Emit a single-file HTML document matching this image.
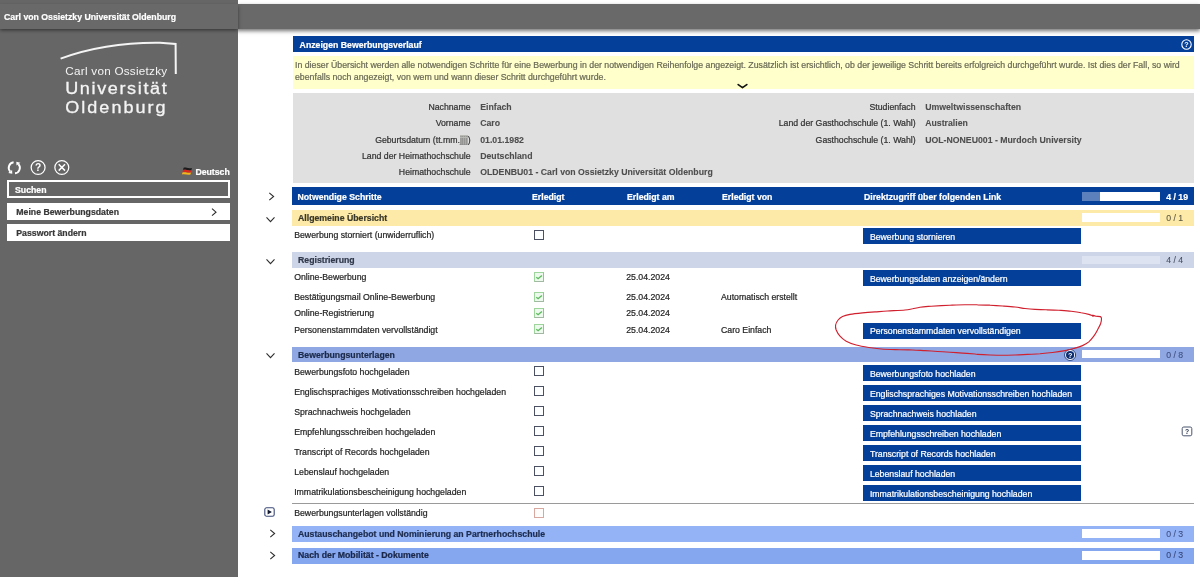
<!DOCTYPE html><html><head><meta charset="utf-8"><title>Bewerbungsverlauf</title><style>
*{margin:0;padding:0;box-sizing:border-box}
html,body{width:1200px;height:577px;overflow:hidden;background:#fff}
body{font-family:"Liberation Sans",sans-serif;font-size:8.73px;color:#262626;position:relative;-webkit-text-stroke:.22px}
#root{position:absolute;left:0;top:0;width:1200px;height:577px;overflow:hidden;will-change:transform}
.a{position:absolute;white-space:nowrap;line-height:12px;height:12px}
.r{text-align:right}
.b{font-weight:bold}
.w{color:#fff}
.bar{position:absolute;left:292.2px;width:901.4px}
.btn{position:absolute;left:863.2px;width:217.6px;height:16px;background:#04409a}
.cb{position:absolute;left:534px;width:10px;height:10px;border:1px solid #4b5163;background:#fdfeff}
.cbg{position:absolute;left:533.9px;width:10px;height:9.7px;border:1px solid #9dd59d;border-right-color:#a3b8a3;border-bottom-color:#a3b8a3;background:#ecf9ec}
.pg{position:absolute;left:1081.8px;width:78.6px;height:8.8px;background:#fff}
</style></head><body><div id="root">
<div style="position:absolute;left:237px;top:4.2px;width:963px;height:24.5px;background:#696969;box-shadow:0 1.5px 4px rgba(0,0,0,.55)"></div>
<div style="position:absolute;left:0;top:0;width:237.9px;height:577px;background:#666"></div>
<div style="position:absolute;left:0;top:4.2px;width:237.9px;height:24.5px;background:#696969;box-shadow:0 1.5px 3.5px rgba(0,0,0,.5)"></div>
<div class="a b w" style="left:4.3px;top:10.6px;font-size:9.5px;transform:scaleX(.918);transform-origin:0 0">Carl von Ossietzky Universität Oldenburg</div>
<svg style="position:absolute;left:0;top:30px" width="238" height="100" viewBox="0 30 238 100">
<path d="M60.6,58.6 C92,47.2 128,42.4 160,42.8 L175.6,44 L175.8,74" fill="none" stroke="#f4f4f4" stroke-width="2" stroke-linejoin="miter"/>
<g fill="#f4f4f4" font-family="Liberation Sans, sans-serif">
<text x="65.3" y="74.9" font-size="11.7" textLength="101.8" lengthAdjust="spacing">Carl von Ossietzky</text>
<text transform="translate(65.2,93.6) scale(1.1,1)" font-size="16.4" textLength="92.3" lengthAdjust="spacing" stroke="#f4f4f4" stroke-width=".3">Universität</text>
<text transform="translate(65.2,112.7) scale(1.1,1)" font-size="16.4" textLength="91.3" lengthAdjust="spacing" stroke="#f4f4f4" stroke-width=".3">Oldenburg</text>
</g></svg>
<svg style="position:absolute;left:5px;top:158px" width="70" height="20" viewBox="5 158 70 20" fill="none" stroke="#fff" stroke-width="1.5">
<path d="M13.6,162.3 A5.5,5.5 0 0 0 10.2,171.5" stroke-width="1.9"/>
<path d="M15,173.3 A5.5,5.5 0 0 0 18.4,164.1" stroke-width="1.9"/>
<path d="M12.3,173.8 L12.1,170 L8.2,172.9 Z M16.3,161.8 L16.5,165.6 L20.4,162.7 Z" fill="#fff" stroke="none"/>
<circle cx="38.1" cy="167.5" r="6.95" stroke-width="1.25"/>
<text x="38.1" y="171.3" font-size="10.2" font-weight="bold" text-anchor="middle" fill="#fff" stroke="none" font-family="Liberation Sans, sans-serif">?</text>
<circle cx="61.8" cy="167.5" r="6.95" stroke-width="1.25"/>
<path d="M58.7,164.3 L65,170.6 M65,164.3 L58.7,170.6" stroke-width="1.5"/>
</svg>
<svg style="position:absolute;left:181px;top:166.6px" width="12" height="9" viewBox="0 0 12 9">
<path d="M2.6,0.8 C4.5,0 6.5,1.8 10.9,1 L10.4,3.3 C6.5,4 4.6,2.2 2,3.1 Z" fill="#1a1a1a"/>
<path d="M2,3.1 C4.6,2.2 6.5,4 10.4,3.3 L9.9,5.5 C6.4,6.2 4.4,4.5 1.4,5.4 Z" fill="#d9281c"/>
<path d="M1.4,5.4 C4.4,4.5 6.4,6.2 9.9,5.5 L9.5,7.6 C6,8.3 3.8,6.7 0.9,7.6 Z" fill="#f2b41a"/>
</svg>
<div class="a b w" style="left:195.4px;top:165.98px;">Deutsch</div>
<div style="position:absolute;left:7px;top:180px;width:222.6px;height:18.2px;border:2px solid #fff;background:#666"></div>
<div class="a b w" style="left:15px;top:183.98px;">Suchen</div>
<div style="position:absolute;left:7px;top:203px;width:222.6px;height:16.6px;background:#fff"></div>
<div class="a b" style="left:16.3px;top:205.98px;color:#383838">Meine Bewerbungsdaten</div>
<svg style="position:absolute;left:209px;top:206px" width="10" height="12" viewBox="0 0 10 12"><path d="M3,2.7 L7,6.2 L3,9.7" fill="none" stroke="#2a2a2a" stroke-width="1.1"/></svg>
<div style="position:absolute;left:7px;top:224.1px;width:222.6px;height:16.7px;background:#fff"></div>
<div class="a b" style="left:16.3px;top:226.98px;color:#383838">Passwort ändern</div>
<div style="position:absolute;left:293px;top:36px;width:900.6px;height:16px;background:#04409a"></div>
<div class="a b w" style="left:299.6px;top:38.98px;">Anzeigen Bewerbungsverlauf</div>
<svg style="position:absolute;left:1180px;top:38px" width="13" height="13" viewBox="0 0 13 13"><circle cx="6.5" cy="6.5" r="4.7" fill="none" stroke="#fff" stroke-width="1.1"/><text x="6.5" y="9.2" font-size="7.2" font-weight="bold" text-anchor="middle" fill="#fff" font-family="Liberation Sans, sans-serif">?</text></svg>
<div style="position:absolute;left:293px;top:55.6px;width:900.6px;height:33.4px;background:#ffffcc"></div>
<div class="a " style="left:295px;top:58.98px;color:#6a6a56;font-size:8.76px">In dieser Übersicht werden alle notwendigen Schritte für eine Bewerbung in der notwendigen Reihenfolge angezeigt. Zusätzlich ist ersichtlich, ob der jeweilige Schritt bereits erfolgreich durchgeführt wurde. Ist dies der Fall, so wird</div>
<div class="a " style="left:295px;top:70.98px;color:#6a6a56;font-size:8.76px">ebenfalls noch angezeigt, von wem und wann dieser Schritt durchgeführt wurde.</div>
<svg style="position:absolute;left:737.4px;top:82.8px" width="11" height="7" viewBox="0 0 11 7"><path d="M1.2,1.6 L5.5,4.6 L9.8,1.6" fill="none" stroke="#111" stroke-width="1.7" stroke-linejoin="round" stroke-linecap="round"/></svg>
<div style="position:absolute;left:293px;top:92.7px;width:900.6px;height:90.1px;background:#e0e0e0"></div>
<div class="a r " style="left:170.60000000000002px;width:300px;top:100.98px;color:#333">Nachname</div>
<div class="a b" style="left:480.2px;top:100.98px;color:#4e4e4e;-webkit-text-stroke:.1px">Einfach</div>
<div class="a r " style="left:170.60000000000002px;width:300px;top:116.98px;color:#333">Vorname</div>
<div class="a b" style="left:480.2px;top:116.98px;color:#4e4e4e;-webkit-text-stroke:.1px">Caro</div>
<div class="a r " style="left:170.60000000000002px;width:300px;top:133.98px;color:#333">Geburtsdatum (tt.mm.<span style="color:#8a8a8a;background:#b9b9b4">jjjj</span>)</div>
<div class="a b" style="left:480.2px;top:133.98px;color:#4e4e4e;-webkit-text-stroke:.1px">01.01.1982</div>
<div class="a r " style="left:170.60000000000002px;width:300px;top:149.98px;color:#333">Land der Heimathochschule</div>
<div class="a b" style="left:480.2px;top:149.98px;color:#4e4e4e;-webkit-text-stroke:.1px">Deutschland</div>
<div class="a r " style="left:170.60000000000002px;width:300px;top:165.98px;color:#333">Heimathochschule</div>
<div class="a b" style="left:480.2px;top:165.98px;color:#4e4e4e;-webkit-text-stroke:.1px">OLDENBU01 - Carl von Ossietzky Universität Oldenburg</div>
<div class="a r " style="left:615.6px;width:300px;top:100.98px;color:#333">Studienfach</div>
<div class="a b" style="left:925.2px;top:100.98px;color:#4e4e4e;-webkit-text-stroke:.1px">Umweltwissenschaften</div>
<div class="a r " style="left:615.6px;width:300px;top:116.98px;color:#333">Land der Gasthochschule (1. Wahl)</div>
<div class="a b" style="left:925.2px;top:116.98px;color:#4e4e4e;-webkit-text-stroke:.1px">Australien</div>
<div class="a r " style="left:615.6px;width:300px;top:133.98px;color:#333">Gasthochschule (1. Wahl)</div>
<div class="a b" style="left:925.2px;top:133.98px;color:#4e4e4e;-webkit-text-stroke:.1px">UOL-NONEU001 - Murdoch University</div>
<div class="bar" style="top:187px;height:17.9px;background:#04409a"></div>
<div class="a b w" style="left:297.4px;top:190.98px;">Notwendige Schritte</div>
<div class="a b w" style="left:532px;top:190.98px;">Erledigt</div>
<div class="a b w" style="left:627px;top:190.98px;">Erledigt am</div>
<div class="a b w" style="left:722px;top:190.98px;">Erledigt von</div>
<div class="a b w" style="left:864px;top:190.98px;">Direktzugriff über folgenden Link</div>
<div class="pg" style="top:191.7px;height:9.2px"></div><div style="position:absolute;left:1081.8px;top:191.7px;width:18px;height:9.2px;background:#5c80bb"></div>
<div class="a b w" style="left:1166.2px;top:190.98px;">4 / 19</div>
<svg style="position:absolute;left:267.1px;top:191.2px" width="9" height="11" viewBox="0 0 9 11"><path d="M2.3,1.9 L6.6,5.5 L2.3,9.1" fill="none" stroke="#2e2e2e" stroke-width="1.1"/></svg>
<div class="bar" style="top:210.4px;height:15.5px;background:#fde9a8"></div>
<div class="a b" style="left:298px;top:211.98px;color:#3a3828">Allgemeine Übersicht</div>
<div class="pg" style="top:213.2px;height:8.6px"></div>
<div class="a " style="left:1166.2px;top:211.98px;color:#5a5640;-webkit-text-stroke:.08px">0 / 1</div>
<svg style="position:absolute;left:265.1px;top:215.3px" width="11" height="9" viewBox="0 0 11 9"><path d="M1.5,2.3 L5.5,6.6 L9.5,2.3" fill="none" stroke="#2e2e2e" stroke-width="1.1"/></svg>
<div class="a " style="left:294.2px;top:228.98px;">Bewerbung storniert (unwiderruflich)</div>
<div class="cb" style="top:230.1px"></div>
<div class="btn" style="top:228.2px"></div>
<div class="a w" style="left:869.9px;top:230.98px;">Bewerbung stornieren</div>
<div class="bar" style="top:252.2px;height:15.5px;background:#cdd6e9"></div>
<div class="a b" style="left:298px;top:253.98px;color:#30384a">Registrierung</div>
<div class="pg" style="top:255.5px;height:8.6px;background:#dde3f1"></div>
<div class="a " style="left:1166.2px;top:253.98px;color:#454d62;-webkit-text-stroke:.08px">4 / 4</div>
<svg style="position:absolute;left:265.1px;top:256.9px" width="11" height="9" viewBox="0 0 11 9"><path d="M1.5,2.3 L5.5,6.6 L9.5,2.3" fill="none" stroke="#2e2e2e" stroke-width="1.1"/></svg>
<div class="a " style="left:294.2px;top:270.98px;">Online-Bewerbung</div>
<div class="cbg" style="top:272px"><svg width="8" height="8" viewBox="0 0 8 8" style="position:absolute;left:0;top:0"><path d="M1.3,4.3 L3.1,5.7 L6.9,2.4" fill="none" stroke="#5cba5c" stroke-width="1.35"/></svg></div>
<div class="a " style="left:626.2px;top:270.98px;">25.04.2024</div>
<div class="a " style="left:294.2px;top:290.98px;">Bestätigungsmail Online-Bewerbung</div>
<div class="cbg" style="top:292px"><svg width="8" height="8" viewBox="0 0 8 8" style="position:absolute;left:0;top:0"><path d="M1.3,4.3 L3.1,5.7 L6.9,2.4" fill="none" stroke="#5cba5c" stroke-width="1.35"/></svg></div>
<div class="a " style="left:626.2px;top:290.98px;">25.04.2024</div>
<div class="a " style="left:721px;top:290.98px;">Automatisch erstellt</div>
<div class="a " style="left:294.2px;top:306.98px;">Online-Registrierung</div>
<div class="cbg" style="top:308.2px"><svg width="8" height="8" viewBox="0 0 8 8" style="position:absolute;left:0;top:0"><path d="M1.3,4.3 L3.1,5.7 L6.9,2.4" fill="none" stroke="#5cba5c" stroke-width="1.35"/></svg></div>
<div class="a " style="left:626.2px;top:306.98px;">25.04.2024</div>
<div class="a " style="left:294.2px;top:323.98px;">Personenstammdaten vervollständigt</div>
<div class="cbg" style="top:324.2px"><svg width="8" height="8" viewBox="0 0 8 8" style="position:absolute;left:0;top:0"><path d="M1.3,4.3 L3.1,5.7 L6.9,2.4" fill="none" stroke="#5cba5c" stroke-width="1.35"/></svg></div>
<div class="a " style="left:626.2px;top:323.98px;">25.04.2024</div>
<div class="a " style="left:721px;top:323.98px;">Caro Einfach</div>
<div class="btn" style="top:270.2px"></div>
<div class="a w" style="left:869.9px;top:272.98px;">Bewerbungsdaten anzeigen/ändern</div>
<div class="btn" style="top:322.9px"></div>
<div class="a w" style="left:869.9px;top:324.98px;">Personenstammdaten vervollständigen</div>
<div class="bar" style="top:346.5px;height:15.9px;background:#8fa8e3"></div>
<div class="a b" style="left:298px;top:348.98px;color:#1c2a4a">Bewerbungsunterlagen</div>
<div class="pg" style="top:349.5px;height:8.8px"></div>
<div class="a " style="left:1166.2px;top:348.98px;color:#3f4e80;-webkit-text-stroke:.08px">0 / 8</div>
<svg style="position:absolute;left:1064px;top:348.7px" width="12" height="12" viewBox="0 0 12 12"><circle cx="6.1" cy="6" r="5.5" fill="#fff" stroke="#16357a" stroke-width="0.9"/><circle cx="6.1" cy="6" r="4.1" fill="#0d2f72"/><text x="6.1" y="8.6" font-size="7.2" font-weight="bold" text-anchor="middle" fill="#fff" font-family="Liberation Sans, sans-serif">?</text></svg>
<svg style="position:absolute;left:265.1px;top:350.9px" width="11" height="9" viewBox="0 0 11 9"><path d="M1.5,2.3 L5.5,6.6 L9.5,2.3" fill="none" stroke="#2e2e2e" stroke-width="1.1"/></svg>
<div class="a " style="left:294.2px;top:365.98px;">Bewerbungsfoto hochgeladen</div>
<div class="cb" style="top:366.0px"></div>
<div class="btn" style="top:364.9px"></div>
<div class="a w" style="left:869.9px;top:367.98px;">Bewerbungsfoto hochladen</div>
<div class="a " style="left:294.2px;top:385.98px;">Englischsprachiges Motivationsschreiben hochgeladen</div>
<div class="cb" style="top:386.0px"></div>
<div class="btn" style="top:384.9px"></div>
<div class="a w" style="left:869.9px;top:387.98px;">Englischsprachiges Motivationsschreiben hochladen</div>
<div class="a " style="left:294.2px;top:405.98px;">Sprachnachweis hochgeladen</div>
<div class="cb" style="top:406.1px"></div>
<div class="btn" style="top:405.0px"></div>
<div class="a w" style="left:869.9px;top:407.98px;">Sprachnachweis hochladen</div>
<div class="a " style="left:294.2px;top:425.98px;">Empfehlungsschreiben hochgeladen</div>
<div class="cb" style="top:426.1px"></div>
<div class="btn" style="top:425.0px"></div>
<div class="a w" style="left:869.9px;top:427.98px;">Empfehlungsschreiben hochladen</div>
<div class="a " style="left:294.2px;top:445.98px;">Transcript of Records hochgeladen</div>
<div class="cb" style="top:446.1px"></div>
<div class="btn" style="top:445.0px"></div>
<div class="a w" style="left:869.9px;top:447.98px;">Transcript of Records hochladen</div>
<div class="a " style="left:294.2px;top:465.98px;">Lebenslauf hochgeladen</div>
<div class="cb" style="top:466.1px"></div>
<div class="btn" style="top:465.0px"></div>
<div class="a w" style="left:869.9px;top:467.98px;">Lebenslauf hochladen</div>
<div class="a " style="left:294.2px;top:485.98px;">Immatrikulationsbescheinigung hochgeladen</div>
<div class="cb" style="top:486.2px"></div>
<div class="btn" style="top:485.1px"></div>
<div class="a w" style="left:869.9px;top:487.98px;">Immatrikulationsbescheinigung hochladen</div>
<svg style="position:absolute;left:1180.6px;top:425.6px" width="12" height="11" viewBox="0 0 12 11"><rect x="1.2" y="1" width="9.6" height="8.8" rx="1.6" fill="#fff" stroke="#4a556e" stroke-width="1"/><text x="6" y="8" font-size="6.8" font-weight="bold" text-anchor="middle" fill="#2a344e" font-family="Liberation Sans, sans-serif">?</text></svg>
<div style="position:absolute;left:292.2px;top:503px;width:901.4px;height:1px;background:#9a9a9a"></div>
<div class="a " style="left:294.2px;top:506.98px;">Bewerbungsunterlagen vollständig</div>
<div class="cb" style="top:508px;height:9.6px;border:1px solid #d8a8a0;background:#fffdfc"></div>
<svg style="position:absolute;left:264px;top:507.2px" width="11" height="10" viewBox="0 0 11 10"><rect x="0.8" y="0.8" width="9.4" height="8.4" rx="1.8" fill="#fff" stroke="#3b4a78" stroke-width="1.1"/><path d="M3.6,2.4 L7.9,5 L3.6,7.6 Z" fill="#141a30"/></svg>
<div class="bar" style="top:525.8px;height:15.8px;background:#93b3f6"></div>
<div class="a b" style="left:298px;top:527.98px;color:#1e2c4e">Austauschangebot und Nominierung an Partnerhochschule</div>
<div class="pg" style="top:529.3px;height:8.8px"></div>
<div class="a " style="left:1166.2px;top:527.98px;color:#3f4e80;-webkit-text-stroke:.08px">0 / 3</div>
<svg style="position:absolute;left:267.7px;top:528.3px" width="9" height="11" viewBox="0 0 9 11"><path d="M2.3,1.9 L6.6,5.5 L2.3,9.1" fill="none" stroke="#2e2e2e" stroke-width="1.1"/></svg>
<div class="bar" style="top:547.6px;height:16px;background:#84a7f0"></div>
<div class="a b" style="left:298px;top:548.98px;color:#1a2748">Nach der Mobilität - Dokumente</div>
<div class="pg" style="top:551px;height:8.8px"></div>
<div class="a " style="left:1166.2px;top:548.98px;color:#384676;-webkit-text-stroke:.08px">0 / 3</div>
<svg style="position:absolute;left:267.7px;top:550.1px" width="9" height="11" viewBox="0 0 9 11"><path d="M2.3,1.9 L6.6,5.5 L2.3,9.1" fill="none" stroke="#2e2e2e" stroke-width="1.1"/></svg>
<svg style="position:absolute;left:820px;top:290px" width="300" height="75" viewBox="820 290 300 75"><path d="M1092.5,315.6 C1091.9,315.4 1090.6,314.9 1088.8,314.4 C1086.9,313.9 1084.2,313.3 1081.2,312.8 C1078.3,312.2 1075.0,311.7 1071.2,311.2 C1067.5,310.8 1062.9,310.5 1058.8,310.2 C1054.6,310.0 1050.2,309.9 1046.2,309.8 C1042.3,309.6 1038.5,309.6 1035.0,309.4 C1031.5,309.2 1028.3,308.9 1025.0,308.5 C1021.7,308.1 1018.8,307.4 1015.0,307.0 C1011.2,306.6 1006.7,306.3 1002.5,306.0 C998.3,305.7 994.2,305.5 990.0,305.2 C985.8,305.0 981.7,304.8 977.5,304.8 C973.3,304.7 969.6,304.7 965.0,304.8 C960.4,304.8 955.6,305.0 950.0,305.2 C944.4,305.5 936.2,305.9 931.2,306.2 C926.2,306.6 923.1,306.8 920.0,307.2 C916.9,307.7 915.0,308.3 912.5,308.8 C910.0,309.2 909.2,309.6 905.0,310.0 C900.8,310.4 892.5,310.7 887.5,311.0 C882.5,311.3 879.2,311.6 875.0,311.9 C870.8,312.2 866.7,312.5 862.5,312.9 C858.3,313.3 853.3,313.8 850.0,314.4 C846.7,315.0 844.5,315.6 842.5,316.5 C840.5,317.4 839.2,318.6 838.1,320.0 C837.0,321.4 835.9,323.3 835.6,325.0 C835.3,326.7 835.5,328.1 836.2,330.0 C837.0,331.9 838.3,334.4 840.0,336.2 C841.7,338.1 843.5,339.8 846.2,341.2 C849.0,342.7 852.5,344.0 856.2,345.0 C860.0,346.0 864.6,346.8 868.8,347.5 C872.9,348.2 876.0,348.6 881.2,349.0 C886.5,349.4 894.8,349.6 900.0,349.8 C905.2,349.9 908.3,349.9 912.5,350.0 C916.7,350.1 920.8,350.4 925.0,350.6 C929.2,350.9 933.3,351.2 937.5,351.5 C941.7,351.8 945.8,352.0 950.0,352.2 C954.2,352.5 958.3,352.8 962.5,353.1 C966.7,353.4 972.5,353.8 975.0,354.0 C977.5,354.2 975.0,354.2 977.5,354.4 C980.0,354.6 985.8,354.9 990.0,355.0 C994.2,355.1 998.3,355.2 1002.5,355.2 C1006.7,355.2 1010.8,355.1 1015.0,355.0 C1019.2,354.9 1023.3,354.6 1027.5,354.4 C1031.7,354.2 1035.8,354.1 1040.0,353.8 C1044.2,353.4 1048.3,353.0 1052.5,352.5 C1056.7,352.0 1061.2,351.3 1065.0,350.6 C1068.8,349.9 1072.1,348.9 1075.0,348.1 C1077.9,347.3 1080.2,346.6 1082.5,345.6 C1084.8,344.6 1086.9,343.5 1088.8,341.9 C1090.6,340.3 1092.3,338.2 1093.8,336.2 C1095.2,334.3 1096.4,332.1 1097.5,330.0 C1098.6,327.9 1099.9,325.6 1100.6,323.8 C1101.3,321.9 1101.5,319.9 1101.5,318.8 C1101.5,317.6 1101.3,317.0 1100.4,316.6 C1099.5,316.2 1097.3,316.4 1096.0,316.2 C1094.7,316.0 1093.2,315.4 1092.6,315.2" fill="none" stroke="#d0202e" stroke-width="1.15" stroke-linecap="round" stroke-linejoin="round"/><circle cx="1093" cy="315.8" r="0.9" fill="#c81e2c"/></svg>
</div></body></html>
